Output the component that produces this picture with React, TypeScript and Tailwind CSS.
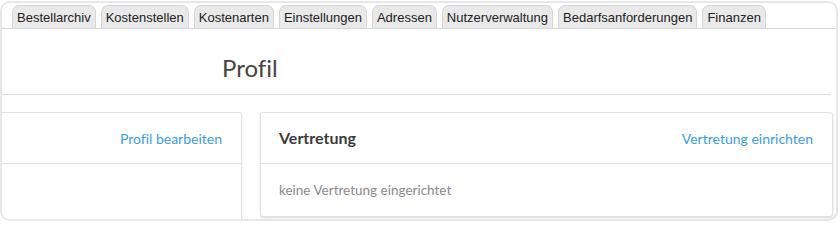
const tabs = [
  "Bestellarchiv",
  "Kostenstellen",
  "Kostenarten",
  "Einstellungen",
  "Adressen",
  "Nutzerverwaltung",
  "Bedarfsanforderungen",
  "Finanzen",
];

const sans = "font-['Lato','Noto_Sans',sans-serif] [font-variant-ligatures:none]";

export default function App() {
  return (
    <div className="h-[222px] w-[840px] overflow-hidden bg-white">
      <div className="mt-[1px] h-[220px] w-[838px] overflow-hidden rounded-[10px] border-2 border-[#e6e6eb] bg-white">
        {/* tab bar */}
        <div className="flex h-[26px] items-end gap-[5px] border-b border-[#d6d6d6] pl-[10px]">
          {tabs.map((tab) => (
            <div
              key={tab}
              className="flex h-[23px] items-center rounded-t-[7px] border border-b-0 border-[#d6d6d6] bg-[#e9e9e9] px-[4px] pt-[1px] font-['Liberation_Sans',Arial,sans-serif] text-[13px] text-[#222]"
            >
              {tab}
            </div>
          ))}
        </div>

        {/* title */}
        <div className={`mr-[5px] border-b border-[#dcdcdc] pb-[12px] pl-[220px] pt-[25px] ${sans}`}>
          <h1 className="text-[24px] leading-[28px] text-[#444]">Profil</h1>
        </div>

        {/* cards */}
        <div className={`mt-[17px] flex gap-[18px] pr-[3px] ${sans}`}>
          <div className="ml-[-2px] h-[130px] w-[242px] rounded-tr-[3px] border border-[#e2e2e2] bg-white shadow-[0_1px_2px_rgba(0,0,0,0.12)]">
            <div className="flex h-[51px] items-center justify-end border-b border-[#dedede] pr-[19px]">
              <span className="text-[14px] text-[#3a9ee2]">Profil bearbeiten</span>
            </div>
          </div>
          <div className="h-[105px] flex-1 rounded-[3px] border border-[#e2e2e2] bg-white shadow-[0_1px_2px_rgba(0,0,0,0.15)]">
            <div className="flex h-[51px] items-center justify-between border-b border-[#dedede] pl-[18px] pr-[19px]">
              <span className="text-[16px] font-bold text-[#3a3a3a]">Vertretung</span>
              <span className="text-[14px] text-[#3a9ee2]">Vertretung einrichten</span>
            </div>
            <div className="pl-[18px] pt-[16px] text-[13.5px] text-[#8a8a8a]">
              keine Vertretung eingerichtet
            </div>
          </div>
        </div>
      </div>
    </div>
  );
}
